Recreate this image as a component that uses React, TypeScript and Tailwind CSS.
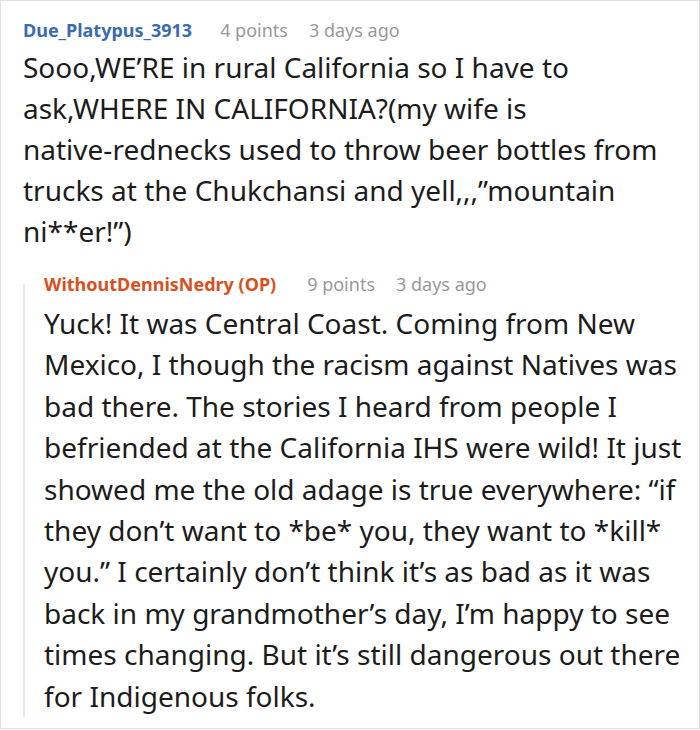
import React from "react";

const c1 = [
  "Sooo,WE’RE in rural California so I have to",
  "ask,WHERE IN CALIFORNIA?(my wife is",
  "native-rednecks used to throw beer bottles from",
  "trucks at the Chukchansi and yell,,,”mountain",
  "ni**er!”)",
];

const c2 = [
  "Yuck! It was Central Coast. Coming from New",
  "Mexico, I though the racism against Natives was",
  "bad there. The stories I heard from people I",
  "befriended at the California IHS were wild! It just",
  "showed me the old adage is true everywhere: “if",
  "they don’t want to *be* you, they want to *kill*",
  "you.” I certainly don’t think it’s as bad as it was",
  "back in my grandmother’s day, I’m happy to see",
  "times changing. But it’s still dangerous out there",
  "for Indigenous folks.",
];

function Meta({
  name,
  nameColor,
  points,
  gap,
}: {
  name: string;
  nameColor: string;
  points: string;
  gap: string;
}) {
  return (
    <div className="flex items-baseline text-[18px] leading-[24px] whitespace-nowrap">
      <span className={`font-bold ${nameColor}`}>{name}</span>
      <span className={`${gap} text-[#999999]`}>{points}</span>
      <span className="ml-[21px] text-[#999999]">3 days ago</span>
    </div>
  );
}

function Body({ lines, leading }: { lines: string[]; leading: string }) {
  return (
    <div className={`text-[28px] ${leading} text-[#1c1c1c]`}>
      {lines.map((l, i) => (
        <div key={i} className="whitespace-nowrap">
          {l}
        </div>
      ))}
    </div>
  );
}

export default function App() {
  return (
    <div className="w-[700px] h-[729px] bg-white border border-[#e2e2e2] overflow-hidden font-['Noto_Sans',sans-serif]">
      <div className="pl-[22px] pt-[17px] flex flex-col">
        <Meta name="Due_Platypus_3913" nameColor="text-[#3a6cb4]" points="4 points" gap="ml-[28px]" />
        <div className="mt-[5px]">
          <Body lines={c1} leading="leading-[41px]" />
        </div>
        <div className="mt-[32px] border-l-2 border-[#e6e6e6] pl-[19px]">
          <div className="-mt-[12px]">
            <Meta name="WithoutDennisNedry (OP)" nameColor="text-[#d94f1e]" points="9 points" gap="ml-[31px]" />
          </div>
          <div className="mt-[7px]">
            <Body lines={c2} leading="leading-[41.4px]" />
          </div>
        </div>
      </div>
    </div>
  );
}
